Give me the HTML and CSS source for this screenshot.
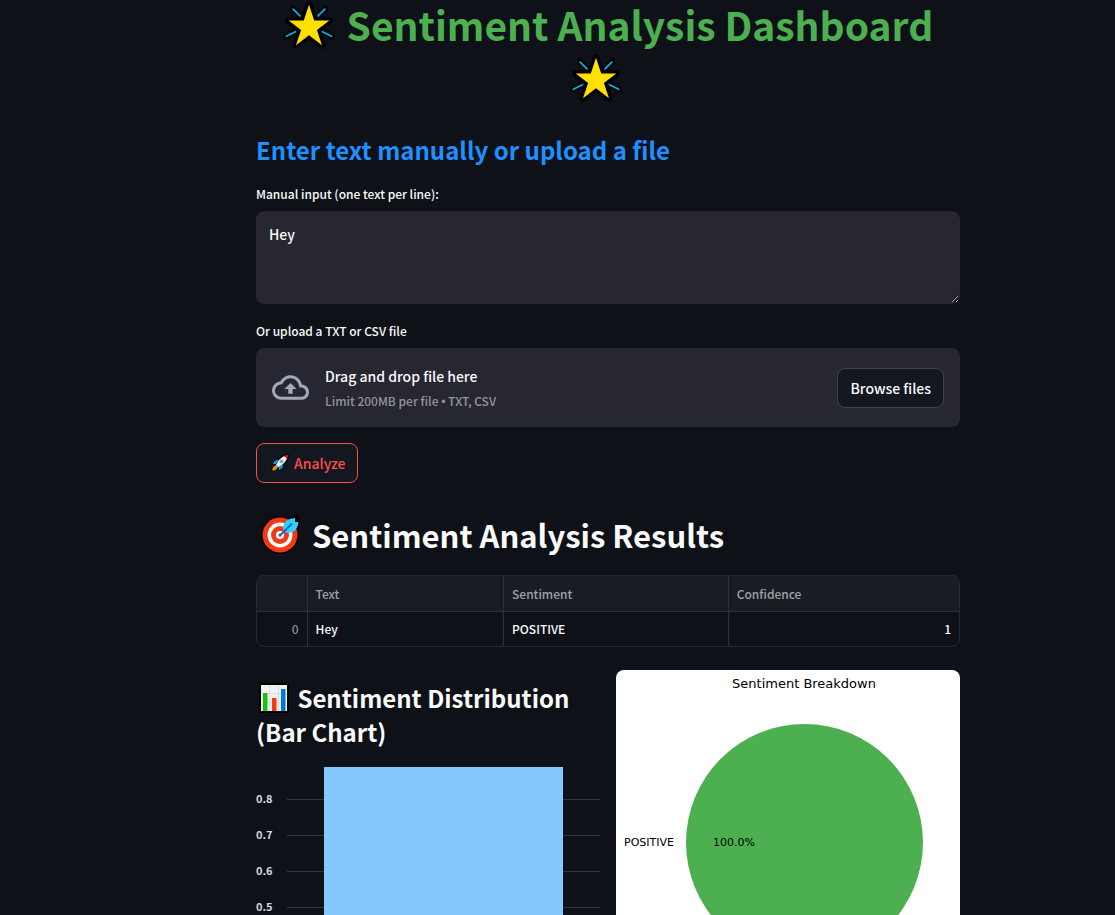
FILE: index.html
```html
<!DOCTYPE html>
<html lang="en">
<head>
<meta charset="utf-8">
<title>Sentiment Analysis Dashboard</title>
<link rel="stylesheet" href="styles.css">
</head>
<body>
<svg class="defs" aria-hidden="true">
  <symbol id="star" viewBox="1 2 46 46">
    <g stroke-linecap="round" stroke-linejoin="round">
      <g stroke="#000" stroke-width="6">
        <path d="M10 11l6 6M38 11l-6 6M4 35l8-4M44 35l-8-4"/>
        <path fill="#000" d="M24 7l4.600 14H42L31 29.500 35.500 43 24 34 12.500 43 17 29.500 6 21h13.400z"/>
      </g>
      <path stroke="#00b4f0" stroke-width="1.600" d="M10 11l6 6M38 11l-6 6M4 35l8-4M44 35l-8-4"/>
    </g>
    <path fill="#ffe000" d="M24 7l4.600 14H42L31 29.500 35.500 43 24 34 12.500 43 17 29.500 6 21h13.400z"/>
  </symbol>
</svg>
<main class="page">
  <h1 class="title"><svg class="title-star"><use href="#star"/></svg> Sentiment Analysis Dashboard <svg class="title-star title-star-end"><use href="#star"/></svg></h1>

  <h2 class="subtitle">Enter text manually or upload a file</h2>

  <div class="field">
    <label class="label" for="manual">Manual input (one text per line):</label>
    <textarea class="textarea" id="manual">Hey</textarea>
  </div>

  <div class="field">
    <span class="label" id="upload-label">Or upload a TXT or CSV file</span>
    <section class="dropzone" aria-labelledby="upload-label">
      <svg class="cloud" viewBox="0 0 24 24" aria-hidden="true"><path fill="currentColor" d="M19.350 10.040C18.670 6.590 15.640 4 12 4 9.110 4 6.600 5.640 5.350 8.040 2.340 8.360 0 10.910 0 14c0 3.310 2.690 6 6 6h13c2.760 0 5-2.240 5-5 0-2.640-2.050-4.780-4.650-4.960zM19 18H6c-2.210 0-4-1.790-4-4 0-2.050 1.530-3.760 3.560-3.970l1.070-.110.500-.950C8.080 7.140 9.940 6 12 6c2.620 0 4.880 1.860 5.390 4.430l.300 1.500 1.530.110c1.560.100 2.780 1.410 2.780 2.960 0 1.650-1.350 3-3 3zM8 13h2.550v3h2.900v-3H16l-4-4-4 4z"/></svg>
      <div class="drop-text">
        <span class="drop-main">Drag and drop file here</span>
        <span class="drop-hint">Limit 200MB per file <span class="bullet">•</span> TXT, CSV</span>
      </div>
      <button class="button" type="button">Browse files</button>
    </section>
  </div>

  <button class="button button-active" type="button">
    <svg class="rocket" viewBox="0 0 18 18" aria-hidden="true">
      <path fill="#000" stroke="#000" stroke-width="1.600" stroke-linejoin="round" d="M17 1c-4 0-7 2-9.500 5L4 6.500 1.500 10l2.500.500L1 17l6.500-3 .500 2.500 3.500-2.500.500-3.500C15 8 17 5 17 1z"/>
      <path fill="#00a4e8" d="M7.500 5.800L4 6.500 1.800 10l3 .300zM12.200 10.500L11.500 14 8 16.300l-.300-3z"/>
      <path fill="#ff8a00" d="M4.500 11.500C2.500 12 1.500 14 1.200 16.800 4 16.500 6 15.500 6.500 13.500z"/>
      <path fill="#f4f4f4" d="M14 2C10 3 7 6.500 4.800 11.500l1.900 1.900C11.500 11 15 8 16 4z"/>
      <path fill="#e81224" d="M17 1c-1.500 0-3 .400-4 1l3 3c.700-1 1-2.500 1-4z"/>
      <path stroke="#bbb" stroke-width="1.500" d="M5.200 11l2 2"/>
      <circle cx="10.600" cy="7.400" r="1.700" fill="#48bce8" stroke="#999" stroke-width=".600"/>
    </svg>
    Analyze
  </button>

  <h1 class="results-title">
    <svg class="target" viewBox="0 0 40 40" aria-hidden="true">
      <g fill="#000"><circle cx="20" cy="20" r="19"/><path stroke="#000" stroke-width="4" stroke-linejoin="round" d="M22 12l8-8 7-2v5l2 2-5 8-8 1z"/></g>
      <circle cx="20" cy="20" r="17.500" fill="#f03a17"/>
      <circle cx="20" cy="20" r="12.500" fill="#fff"/>
      <circle cx="20" cy="20" r="9" fill="#f03a17"/>
      <circle cx="20" cy="20" r="4" fill="#fff"/>
      <circle cx="20" cy="20" r="1.600" fill="#f03a17"/>
      <path fill="#30d2fa" d="M23 14c0-6 3-10 12-11v4h3.500c-1 8-5 11-11.500 11z"/>
      <path stroke="#0070d8" stroke-width="2" stroke-linecap="round" d="M20 20.500L31.500 9"/>
    </svg>
    <span>Sentiment Analysis Results</span>
  </h1>

  <div class="table-frame">
    <table class="table">
      <colgroup><col class="col-index"><col class="col-text"><col class="col-sentiment"><col></colgroup>
      <thead><tr><th></th><th>Text</th><th>Sentiment</th><th>Confidence</th></tr></thead>
      <tbody><tr><td class="num index">0</td><td>Hey</td><td>POSITIVE</td><td class="num">1</td></tr></tbody>
    </table>
  </div>

  <div class="columns">
    <section class="column">
      <h2 class="chart-title"><svg class="bars-icon" viewBox="0 0 30 30" aria-hidden="true">
        <path fill="#000" d="M0 0h30v30H0z"/><path fill="#f2f2f2" d="M2 2h26v26H2z"/>
        <path stroke="#dedede" d="M10.500 2v26M19.500 2v26M2 10.500h26M2 19.500h26"/>
        <path fill="#16c60c" d="M4 10h4.500v18H4z"/><path fill="#f03a17" d="M13 15h4.500v13H13z"/><path fill="#0078d7" d="M22 6h4.500v22H22z"/>
      </svg> Sentiment Distribution (Bar Chart)</h2>
      <svg class="bar-chart" viewBox="0 0 344 322" role="img" aria-label="Bar chart: POSITIVE, 1">
        <path class="grid" d="M31 32.500h313M31 68.500h313M31 104.500h313M31 140.500h313M31 176.500h313M31 212.500h313M31 248.500h313M31 284.500h313M31 320.500h313"/>
        <g class="axis-labels">
          <text x="0" y="36">0.8</text><text x="0" y="72">0.7</text><text x="0" y="108">0.6</text><text x="0" y="144">0.5</text>
        </g>
        <rect class="bar" x="68" y="0" width="239" height="321"/>
      </svg>
    </section>
    <section class="column">
      <svg class="pie-chart" viewBox="0 0 344 310" role="img" aria-label="Pie chart: POSITIVE, 100.0%">
        <circle cx="188.500" cy="172.500" r="118.500" fill="#4caf50"/>
        <text class="pie-title" x="188" y="18" text-anchor="middle">Sentiment Breakdown</text>
        <text class="pie-label" x="58" y="176" text-anchor="end">POSITIVE</text>
        <text class="pie-label" x="118" y="176" text-anchor="middle">100.0%</text>
      </svg>
    </section>
  </div>
</main>
</body>
</html>
```
FILE: styles.css
```css
@charset "utf-8";
* { box-sizing: border-box; }
body {
  margin: 0;
  background: #0e1117;
  color: #fafafa;
  font-family: "Noto Sans CJK SC", "Noto Sans", sans-serif;
  font-size: 14px;
  font-weight: 500;
}
.defs { position: absolute; width: 0; height: 0; }
.page {
  height: 100vh;
  overflow: hidden;
  padding: 0 155px 0 256px;
}
h1, h2 { margin: 0; }
.title {
  margin-top: -2px;
  color: #4caf50;
  font-size: 39px;
  line-height: 53px;
  font-weight: 700;
  text-align: center;
}
.title-star {
  width: 52px;
  height: 52px;
  margin: 0 3px 0 0;
  vertical-align: -10px;
}
.title-star-end { margin-right: 24px; }
.subtitle {
  margin: 29px 0 16px;
  color: #1e90ff;
  font-size: 24px;
  line-height: 34px;
  font-weight: 700;
}
.field { margin-top: 16px; }
.label {
  display: block;
  margin-bottom: 7px;
  font-size: 12px;
  line-height: 21px;
}
.textarea {
  display: block;
  width: 100%;
  height: 93px;
  padding: 10px 12px;
  border: 1px solid #262730;
  border-radius: 8px;
  outline: 0;
  background: #262730;
  color: #fafafa;
  font: inherit;
  line-height: 24px;
}
.dropzone {
  display: flex;
  align-items: center;
  padding: 16px;
  border-radius: 8px;
  background: #262730;
}
.cloud { width: 37px; height: 37px; color: #a3a8b8; }
.drop-text {
  display: flex;
  flex: 1;
  flex-direction: column;
  gap: 3px;
  margin-left: 16px;
}
.drop-main { line-height: 24px; }
.drop-hint { color: #94959b; font-size: 12px; line-height: 20px; }
.bullet { font-family: "Liberation Sans", sans-serif; line-height: 12px; }
.button {
  display: flex;
  align-items: center;
  gap: 6px;
  height: 40px;
  padding: 0 12px;
  border: 1px solid #41444c;
  border-radius: 8px;
  background: #131720;
  color: #fafafa;
  font: inherit;
}
.button-active {
  gap: 5px;
  margin-top: 16px;
  padding-right: 11px;
  border-color: #ff4b4b;
  color: #ff4b4b;
}
.rocket { width: 18px; height: 18px; margin-left: 2px; }
.results-title {
  display: flex;
  align-items: center;
  gap: 12px;
  margin-top: 30px;
  padding-left: 4px;
  font-size: 31px;
  line-height: 43px;
  font-weight: 700;
}
.target { width: 40px; height: 40px; }
.table-frame {
  margin-top: 19px;
  border: 1px solid #262930;
  border-radius: 8px;
  overflow: hidden;
}
.table {
  width: 100%;
  border-collapse: collapse;
  table-layout: fixed;
  font-size: 12px;
  line-height: 18px;
}
.col-index { width: 50px; }
.col-text { width: 28%; }
.col-sentiment { width: 32%; }
.table th, .table td { height: 35px; padding: 0 8px; text-align: left; }
.table th {
  padding-top: 2px;
  border-bottom: 1px solid #2d3037;
  background: #1a1c24;
  color: #a0a1a5;
  font-weight: 500;
}
.table th + th, .table td + td { border-left: 1px solid #2d3037; }
.table .num { text-align: right; }
.table .index { color: #8b8d93; }
.columns {
  display: grid;
  grid-template-columns: 1fr 1fr;
  align-items: start;
  gap: 16px;
  margin-top: 23px;
}
.chart-title {
  padding-top: 11px;
  font-size: 24px;
  line-height: 34px;
  font-weight: 700;
}
.bars-icon { width: 30px; height: 30px; margin: 0 3px; vertical-align: -5px; }
.bar-chart { display: block; width: 100%; margin-top: 18px; }
.grid { stroke: #31343b; }
.bar { fill: #83c9ff; }
.axis-labels { fill: #d5d7de; font-size: 11px; font-weight: 700; }
.pie-chart {
  display: block;
  width: 100%;
  border-radius: 8px;
  background: #fff;
  font-family: "DejaVu Sans", sans-serif;
  font-weight: 400;
}
.pie-title { font-size: 13px; }
.pie-label { font-size: 11px; }
```
